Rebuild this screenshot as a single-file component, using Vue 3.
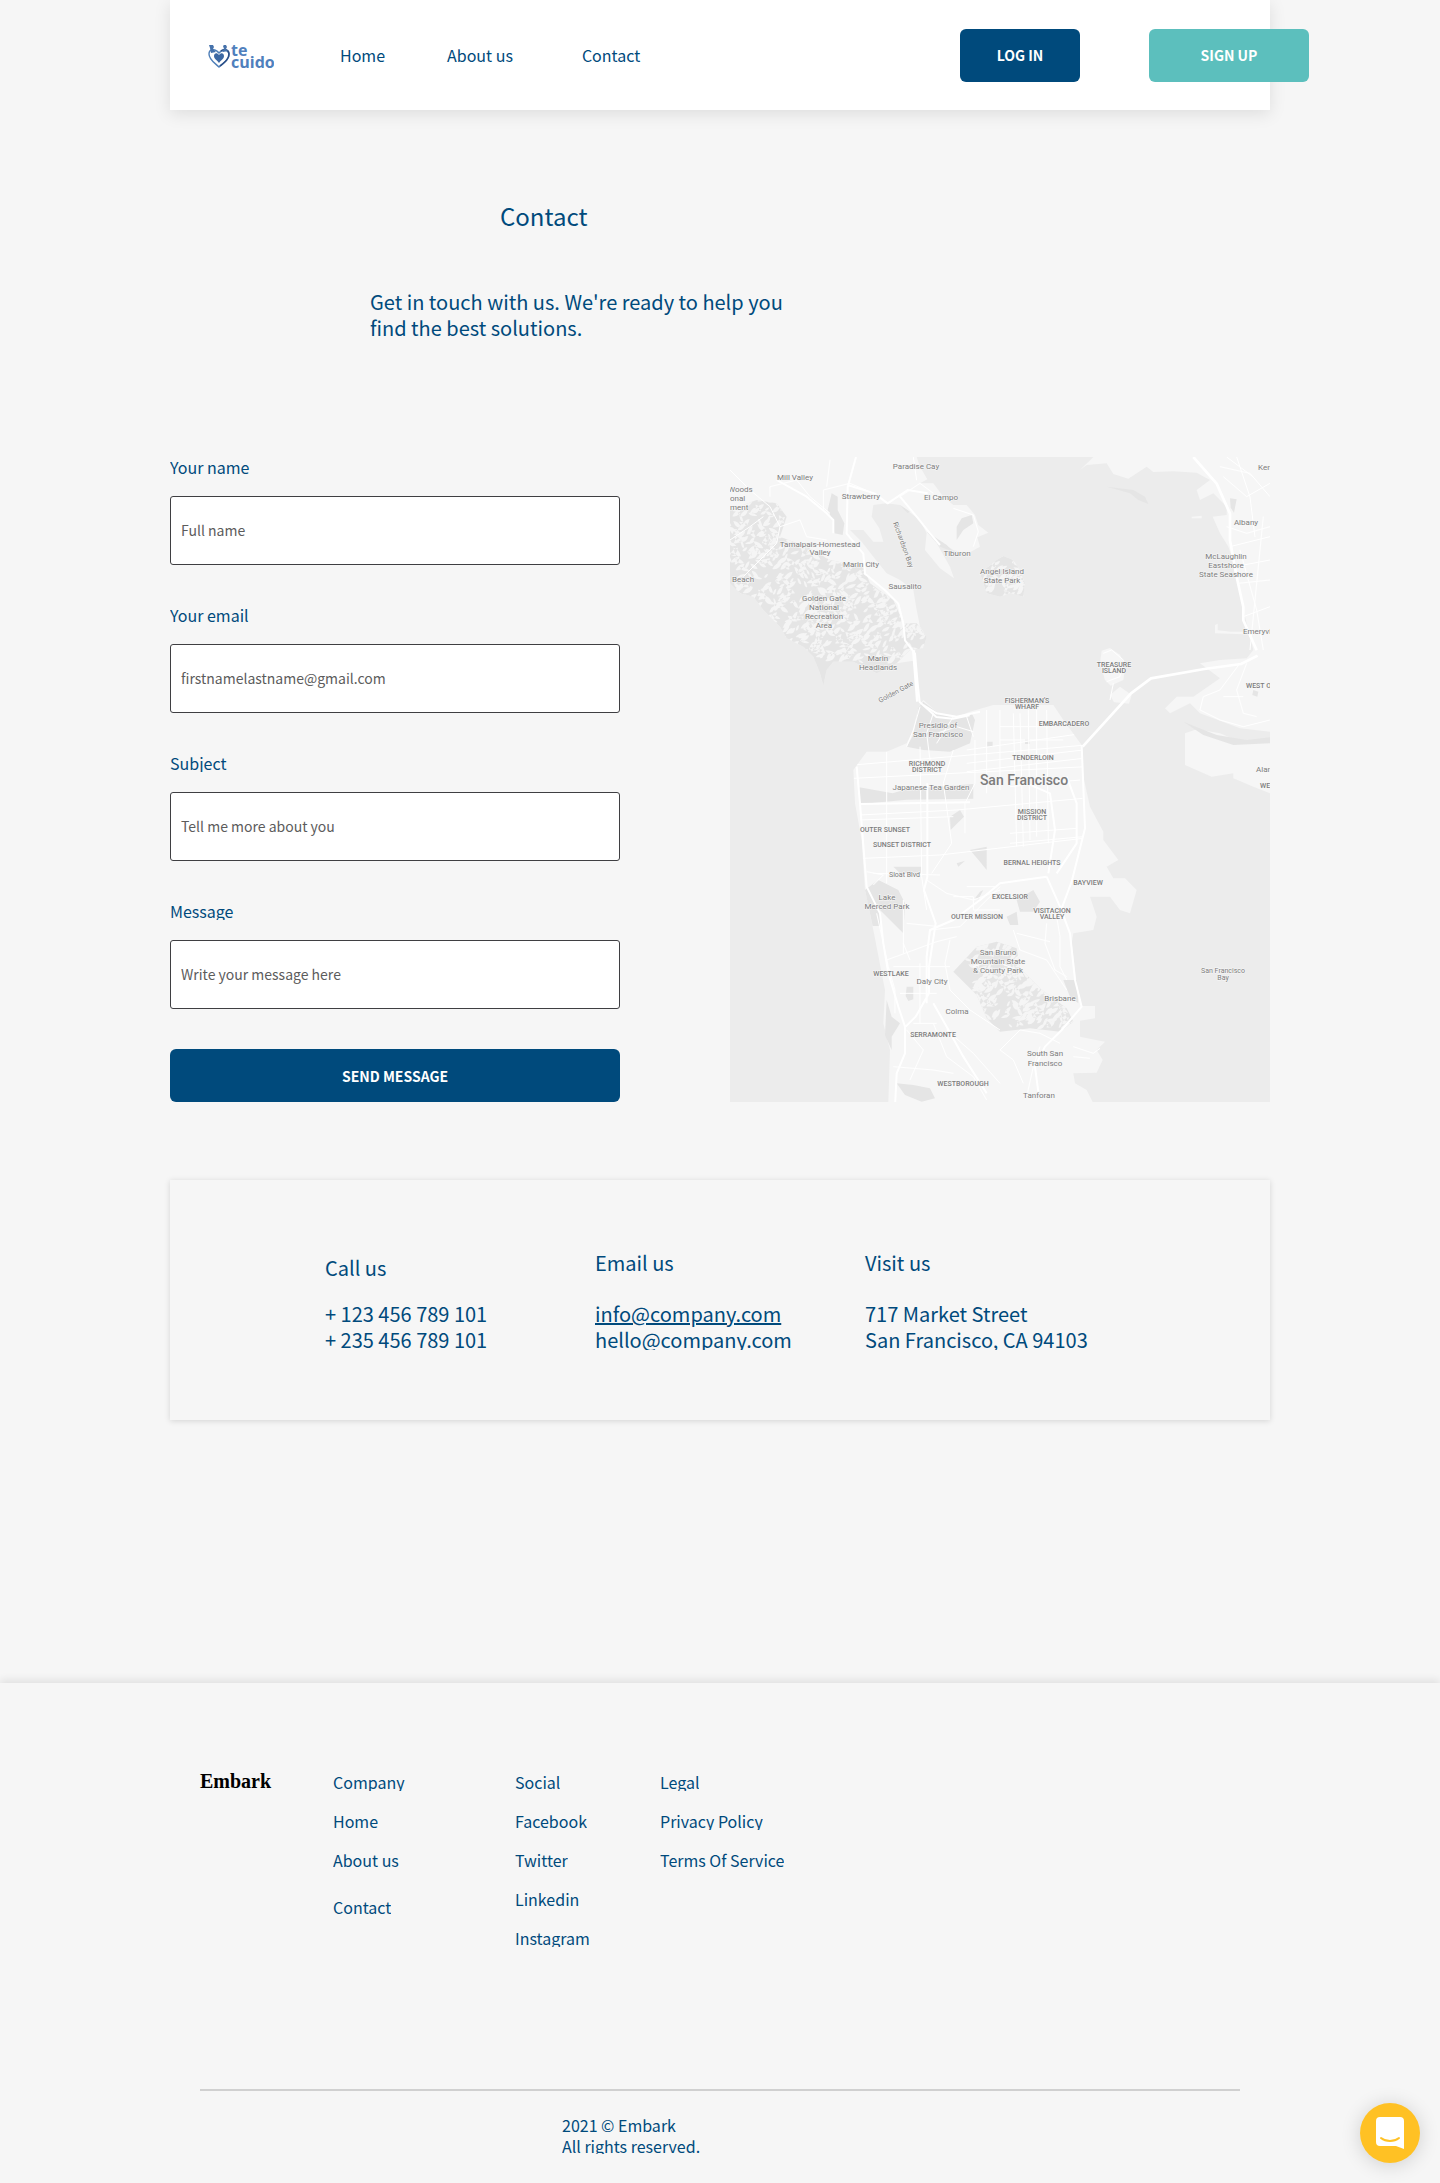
<script setup>
const nav = ['Home', 'About us', 'Contact']

const fields = [
  { id: 'name', label: 'Your name', type: 'text', placeholder: 'Full name' },
  { id: 'email', label: 'Your email', type: 'email', placeholder: 'firstnamelastname@gmail.com' },
  { id: 'subject', label: 'Subject', type: 'text', placeholder: 'Tell me more about you' },
  { id: 'message', label: 'Message', type: 'text', placeholder: 'Write your message here' }
]

const footerColumns = [
  { title: 'Company', links: ['Home', 'About us', 'Contact'] },
  { title: 'Social', links: ['Facebook', 'Twitter', 'Linkedin', 'Instagram'] },
  { title: 'Legal', links: ['Privacy Policy', 'Terms Of Service'] }
]

// Small deterministic generator, so the hill shading is the same on each load.
function ridges(seed, count, x0, y0, x1, y1) {
  let s = seed
  const rnd = () => {
    s = (s * 16807) % 2147483647
    return s / 2147483647
  }
  let d = ''
  for (let i = 0; i < count; i++) {
    const x = Math.round(x0 + rnd() * (x1 - x0))
    const y = Math.round(y0 + rnd() * (y1 - y0))
    const dx = Math.round(10 + rnd() * 22) * (rnd() > 0.3 ? 1 : -1)
    const dy = Math.round(8 + rnd() * 18)
    d += `M${x} ${y}q${Math.round(dx / 3)} ${-dy} ${dx} ${-dy}q${Math.round(-dx / 4)} ${dy + 4} ${-dx} ${dy}l6 9z`
  }
  return d
}
const marinRidges = ridges(71, 1000, 30, 150, 620, 640)
const brunoRidges = ridges(93, 300, 750, 1480, 1050, 1740)
const angelRidges = ridges(17, 70, 785, 320, 915, 445)

const towns = [
  [65, 23, 'Mill Valley'], [186, 12, 'Paradise Cay'], [131, 42, 'Strawberry'], [211, 43, 'El Campo'],
  [90, 90, 'Tamalpais-Homestead'], [90, 98, 'Valley'], [131, 110, 'Marin City'], [227, 99, 'Tiburon'],
  [13, 125, 'Beach'], [175, 132, 'Sausalito'], [94, 144, 'Golden Gate'], [94, 153, 'National'],
  [94, 162, 'Recreation'], [94, 171, 'Area'], [148, 204, 'Marin'], [148, 213, 'Headlands'],
  [272, 117, 'Angel Island'], [272, 126, 'State Park'], [208, 271, 'Presidio of'], [208, 280, 'San Francisco'],
  [516, 68, 'Albany'], [496, 102, 'McLaughlin'], [496, 111, 'Eastshore'], [496, 120, 'State Seashore'],
  [201, 333, 'Japanese Tea Garden'], [157, 443, 'Lake'], [157, 452, 'Merced Park'],
  [202, 527, 'Daly City'], [227, 557, 'Colma'], [268, 498, 'San Bruno'], [268, 507, 'Mountain State'],
  [268, 516, '& County Park'], [330, 544, 'Brisbane'], [315, 599, 'South San'], [315, 609, 'Francisco'],
  [309, 641, 'Tanforan']
]
const edgeTowns = [
  [-2, 35, 'Woods'], [0, 44, 'onal'], [0, 53, 'ment'], [528, 13, 'Ken'], [513, 177, 'Emeryville'], [526, 315, 'Alameda']
]
const districts = [
  [384, 210, 'TREASURE'], [384, 216, 'ISLAND'], [297, 246, "FISHERMAN'S"], [297, 252, 'WHARF'],
  [334, 269, 'EMBARCADERO'], [303, 303, 'TENDERLOIN'], [197, 309, 'RICHMOND'], [197, 315, 'DISTRICT'],
  [302, 357, 'MISSION'], [302, 363, 'DISTRICT'], [155, 375, 'OUTER SUNSET'], [172, 390, 'SUNSET DISTRICT'],
  [302, 408, 'BERNAL HEIGHTS'], [358, 428, 'BAYVIEW'], [280, 442, 'EXCELSIOR'], [322, 456, 'VISITACION'],
  [322, 462, 'VALLEY'], [247, 462, 'OUTER MISSION'], [161, 519, 'WESTLAKE'], [203, 580, 'SERRAMONTE'],
  [233, 629, 'WESTBOROUGH']
]
</script>

<template>
  <div class="page">
    <header class="topbar">
      <a class="logo" href="#" aria-label="te cuido">
        <svg viewBox="0 0 66 28" width="66" height="28">
          <g transform="translate(0 3)">
            <path d="M11 23C7 19 1 16 1 10 1 5 7 4 11 9c4-5 10-3 10 2 0 5-6 8-10 12z" fill="none" stroke="#4f7fb8" stroke-width="1.4" />
            <path d="M12 22c5-4 9-7 9-12 0-4-4-6-8-3" fill="none" stroke="#2c4f87" stroke-width="1.6" />
            <path d="M11 19c-2-3-5-4-5-7 0-3 3-4 5-1 2-3 5-2 5 1 0 3-3 4-5 7z" fill="#3c68a3" />
            <path d="M1 1h4l1 2-1 2 3 3-5 1-1-5zM15 2l1-1h2l1 2-1 2 2 2-5 1-1-1 2-2z" fill="#4672ab" />
          </g>
          <text x="23" y="15" class="logo-text">te</text>
          <text x="23" y="27" class="logo-text">cuido</text>
        </svg>
      </a>
      <nav class="nav">
        <a v-for="item in nav" :key="item" href="#">{{ item }}</a>
      </nav>
      <div class="actions">
        <button type="button" class="btn login">LOG IN</button>
        <button type="button" class="btn signup">SIGN UP</button>
      </div>
    </header>

    <main class="content">
      <section class="intro">
        <h1>Contact</h1>
        <p>Get in touch with us. We're ready to help you find the best solutions.</p>
      </section>

      <section class="reach">
        <form class="form" @submit.prevent>
          <div v-for="f in fields" :key="f.id" class="field">
            <label :for="f.id">{{ f.label }}</label>
            <input :id="f.id" :type="f.type" :placeholder="f.placeholder" />
          </div>
          <button type="submit" class="btn">SEND MESSAGE</button>
        </form>

        <svg class="map" viewBox="0 0 540 645" preserveAspectRatio="xMidYMid slice" role="img" aria-label="Map of San Francisco">
          <defs>
            <clipPath id="marin-hills">
              <path d="M30 180L110 150 170 160 200 200 180 260 260 290 330 330 430 350 450 400 520 450 550 520 590 520 620 560 610 595 570 600 530 640 470 670 400 635 340 635 320 660 310 707 300 670 280 620 250 590 200 565 180 530 130 480 100 440 60 430 30 400z" />
            </clipPath>
            <clipPath id="bruno-hills">
              <path d="M770 1490l60-15 60 20 10 60 60 60 80 60 20 40-40 30-90-10-90 10-40-40-30-70-70-70z" />
            </clipPath>
            <clipPath id="angel"><path d="M780 370l50-40 20-12 30 12 20 30 15 40-5 40-40-10-30 10-40-10-10-30z" /></clipPath>
            <clipPath id="city">
              <path d="M400 960L440 905 500 905 560 880 600 890 740 880 760 780 840 770 1000 765 1030 810 1085 885 1090 1180 1030 1290 700 1290 640 1450 460 1450 430 1300 425 1170 405 1060z" />
            </clipPath>
          </defs>
          <g transform="scale(0.33333) translate(-30 -21)">
            <path class="water" d="M30 21H1650V1956H30z" />
            <g class="land">
              <path d="M30 21H590L600 50 622 88 600 100 640 100 670 140 700 165 740 165 765 195 775 225 805 248 772 262 780 290 740 312 700 300 640 262 690 350 702 385 660 355 615 300 620 250 600 210 540 165 500 160 460 165 455 200 478 235 490 275 460 275 430 240 390 240 425 275 460 320 500 370 540 390 580 420 590 480 600 530 620 560 610 595 588 590 580 632 530 640 470 670 400 635 340 635 320 660 310 707 300 670 280 620 250 590 200 565 180 530 130 480 100 440 60 430 30 400z" />
              <path d="M780 370l50-40 20-12 30 12 20 30 15 40-5 40-40-10-30 10-40-10-10-30z" />
              <path d="M1080 60l40-39H1650V845L1560 835 1440 790 1410 760 1350 790 1335 775 1370 740 1420 740 1500 685 1440 640 1500 630 1580 625 1600 600 1580 520 1570 480 1560 420 1540 330 1525 290 1500 250 1478 200 1520 195 1520 170 1480 130 1440 150 1430 120 1470 90 1430 68 1360 64 1300 66 1280 50 1225 86 1180 72 1160 40 1100 45z" />
              <path d="M1395 850l35-12 70 12 60 25 90-5v160l-50-20-60-25 0-15-65 10-80-35z" />
              <path d="M400 960L440 905 500 905 560 880 580 840 595 770 610 750 650 785 700 805 750 785 820 765 1000 765 1030 810 1085 885 1090 980 1110 1070 1150 1145 1150 1170 1195 1230 1160 1250 1180 1285 1215 1285 1250 1320 1230 1390 1200 1380 1170 1340 1110 1340 1130 1400 1120 1440 1060 1450 1055 1480 1070 1600 1085 1668 1125 1668V1705L1080 1712V1760L1155 1775 1130 1800 1148 1830 1130 1868 1060 1870 1065 1900 1100 1920 1118 1956H505L510 1800 490 1720 495 1620 460 1440 435 1320 425 1170 405 1060z" />
              <path d="M1140 640l5-38 25-8 30 20 16 36-6 40-38 17-17-17z" />
              <path d="M1170 735l30-25 35 25-8 26-45-4z" />
              <path d="M1415 200l30-3v8h-30zM1485 550v-25l8-4v20l40 4h40v8z" />
            </g>
            <g class="park">
              <path d="M30 180L110 150 170 160 200 200 180 260 260 290 330 330 430 350 450 400 520 450 550 520 590 520 620 560 610 595 570 600 530 640 470 670 400 635 340 635 320 660 310 707 300 670 280 620 250 590 200 565 180 530 130 480 100 440 60 430 30 400z" />
              <path d="M780 370l50-40 20-12 30 12 20 30 15 40-5 40-40-10-30 10-40-10-10-30z" />
              <path d="M335 130l18 10 0 40 20 40-5 35-25-5-5-40-15-30z" />
              <path d="M725 205l30-10 5 25-30 20-20 30 0-40zM620 245l60 40 20 20-40-15zM540 165l30 20-8 4z" />
              <path d="M595 770l15-15 40 30 50 20 55-15 10 20-15 70-60 25-80-5-50-10 20-35z" />
              <path d="M418 1012l100 18 40-12 202-16v44l-200 3-142 14z" />
              <path d="M435 1320l40-30 60 30 20 40-5 90-70-70 0 48-22 0z" />
              <path d="M500 1650l15 50 25 20-25 40v40l-20-45zM530 1900l50 5 50 10 15 30-40 10-50-20zM560 1610h20v38l-15 5-8-15z" />
              <path d="M770 1490l60-15 60 20 10 60 60 60 80 60 20 40-40 30-90-10-90 10-40-40-30-70-70-70z" />
              <path d="M690 1100l30-20 12 20-25 25-15 15zM750 1200l50-10v70l-20-25zM520 1250h85v20h-65zM780 1325l10-5-15 28-10-3zM890 1350l50-30 20 35-20 30h-40zM860 1400l30-15 5 40-25 0zM710 1240l25-8-20 18z" />
              <path d="M1160 110l80 10 35 20 10 22-30-12-25-20zM1030 1590h40l5 70-25-20zM1390 815l100 40 90 15 70-8v18l-110 5-90-30z" />
              <path d="M590 1180l12 0v10h-12zM900 740h30v20h-30zM800 875h18v15h-18zM915 868h14v14h-14zM1600 720l15 5-3 15-15-5zM1530 145l20 3-8 40-10-15z" />
            </g>
            <g class="ridge">
              <path clip-path="url(#marin-hills)" :d="marinRidges" />
              <path clip-path="url(#bruno-hills)" :d="brunoRidges" />
              <path clip-path="url(#angel)" :d="angelRidges" />
            </g>
            <g class="roads thin">
              <path d="M30 60l60 60 60 50 30 60-10 50-40 40-60 60M150 140V110l80-20 40 50 60 50M310 180v-60l80-20 70 30M330 30l-10 80M180 230l60-20 20 50 60 10M30 270l60-40 40-30M540 140l60-40 40 30M580 21l10 70M700 175l60 20 15 50-15 45" />
              <path d="M600 770l-20 70-20 50M640 790l-20 60 10 80M700 800l-50 80M740 800l20 60M650 850l60-20 50 15" />
              <path clip-path="url(#city)" d="M400 945l700-60M400 985l700-35M420 1095l290-15 380-35M420 1110l280-10M430 1225l230-10 430-50M460 1270l200 5M500 900v400M600 880l5 400 15 100M700 900l-30 100 25 180-60 90M765 870v130l-30 60v90M800 780v250M840 780v240M880 790l10 400M900 790l10 400M925 780l5 390M950 780l0 380M980 780l5 400M840 830h160M840 870h190M740 900l350-50M740 940l350-40M740 965l350-40M870 1010l210-20M870 1150l200-15M870 1180l220-20" />
              <path d="M440 1265l50 10-30 30M620 1290l60 40 80 20 80-30M560 1420l100 10M630 1440l90-10 60-60 60-60M470 1390l20 90 15 70 20 70 0 70M500 1530l150-55 60-15M550 1480l20 50M550 1350v160M520 1550h170M540 1630h110M580 1720h70M600 1540v180M690 1470l-15 70 15 80 60 60 90 60M680 1740l80 70 80 90M560 1740l50 60-40 90M640 1720l40 100 80 60 40 70M520 1850l120 10 60 10M760 1550l60-20 70 30M840 1800l60-60 60 10 60 30M840 1800l40 30 30 70M960 1790l-20 60-20 90M880 1440l20 60 80 30 60 90M890 1450l60 15 40 10M1010 1400l10 60v90l20 40M980 1420l-5 60 30 80 35 20M1060 1790l60 20 20-15M1060 1820l50 5M740 1310l90 0M700 1340h60v40h80" />
              <path d="M1510 80l70 60 70-40M1550 21l40 120 15 120M1500 50l90 20 60 70M1520 230l60 20 70-20M1530 290l120-30M1545 350l105-20M1555 400l95-10M1570 500l80-30M1590 600l40-400M1560 300l50 180 20 120M1520 21l80 60M1580 640l-30 80 20 70 40 10M1560 640l-60 80-50 20-10 40 60 30 70 20 80-20M1510 740l60 0" />
              <path d="M1150 610l25-10 35 30-10 50-40 15M1170 750l10-50" />
            </g>
            <g class="roads">
              <path d="M408 21l-25 90-3 140 50 60 5 60 60 50 40 40 15 60 5 50 30 40 8 90 6 55 50 45 50 5 50-10M170 90l90 50 60 50 20 20v40M383 105l80 25 40 30 60-40 60 10M540 140l50 60 40 50 30 35" />
              <path class="wide" d="M580 600l12 155M1088 890l145-160 60-45 160-28 110-15 50-25M1420 21l70 80 40 90 0 80 20 110 20 90 0 40 40 90" />
              <path d="M610 765l40 25 60 10 70-15M410 950l10 110 15 190 5 60 40 80 10 90 15 90 30 100 20 60 0 80-25 60-5 100M622 1000l0 280-10 40 35 100-20 130 0 80-40 70-30 30M420 1062l330-5M980 1280l-140 20-60 50-80 60-70 30-10 80 0 140M980 1280l40 90 30 80 15 140 20 80-60 70-50 50-30 60 10 76M1085 885l10 250-40 160-30 80M920 1000l70 30 15 110-20 130M1040 980l30 80 0 120-60 90M640 1660l40 70 50 90 70 110" />
            </g>
          </g>
          <g class="labels">
            <text v-for="(t, i) in towns" :key="'t' + i" :x="t[0]" :y="t[1]" text-anchor="middle">{{ t[2] }}</text>
            <text v-for="(t, i) in edgeTowns" :key="'e' + i" :x="t[0]" :y="t[1]">{{ t[2] }}</text>
            <text class="small" x="493" y="516" text-anchor="middle">San Francisco</text>
            <text class="small" x="493" y="523" text-anchor="middle">Bay</text>
            <text class="small" x="159" y="420">Sloat Blvd</text>
            <text class="small" transform="translate(163 66) rotate(70)">Richardson Bay</text>
            <text class="small" transform="translate(150 246) rotate(-28)">Golden Gate</text>
          </g>
          <g class="labels district">
            <text v-for="(t, i) in districts" :key="'d' + i" :x="t[0]" :y="t[1]" text-anchor="middle">{{ t[2] }}</text>
            <text x="516" y="231">WEST OAKLAND</text>
            <text x="530" y="331">WEST END</text>
          </g>
          <text class="labels city" x="294" y="328" text-anchor="middle">San Francisco</text>
        </svg>
      </section>

      <section class="card">
        <div class="info">
          <h2 class="low">Call us</h2>
          <p>+ 123 456 789 101<br />+ 235 456 789 101</p>
        </div>
        <div class="info">
          <h2>Email us</h2>
          <p><a class="underlined" href="#">info@company.com</a><br /><a href="#">hello@company.com</a></p>
        </div>
        <div class="info">
          <h2>Visit us</h2>
          <p>717 Market Street<br />San Francisco, CA 94103</p>
        </div>
      </section>
    </main>

    <footer class="footer">
      <div class="footer-inner">
        <div class="columns">
          <a class="brand" href="#">Embark</a>
          <section v-for="col in footerColumns" :key="col.title" class="column" :class="col.title.toLowerCase()">
            <h3>{{ col.title }}</h3>
            <a v-for="link in col.links" :key="link" href="#">{{ link }}</a>
          </section>
        </div>
        <hr />
        <p class="copyright">2021 © Embark<br />All rights reserved.</p>
      </div>
    </footer>

    <button type="button" class="chat" aria-label="Open chat">
      <svg viewBox="0 0 28 32" width="28" height="32">
        <path d="M4 0h20a4 4 0 0 1 4 4v28l-8-3H4a4 4 0 0 1-4-4V4a4 4 0 0 1 4-4z" fill="#fff" />
        <path d="M5 21c5 4 13 4 18 0" fill="none" stroke="#ffc124" stroke-width="2" stroke-linecap="round" />
      </svg>
    </button>
  </div>
</template>

<style>
body {
  margin: 0;
  background: #f6f6f6;
}
</style>

<style scoped>
.page {
  background: #f6f6f6;
  color: #004a7c;
  font-family: "Noto Sans CJK SC", "Open Sans", sans-serif;
  font-size: 16px;
  line-height: 18px;
}
.page * {
  box-sizing: border-box;
}
h1, h2, h3, p {
  margin: 0;
  font-weight: 400;
}
a {
  color: inherit;
  text-decoration: none;
}
.topbar,
.content {
  width: 100%;
  max-width: 1100px;
  margin: 0 auto;
}
.topbar {
  display: flex;
  align-items: center;
  height: 110px;
  padding-left: 38px;
  background: #fff;
  box-shadow: 0 4px 16px rgba(0, 0, 0, 0.1);
}
.logo {
  display: flex;
}
.logo-text {
  font: 700 16px "Open Sans", sans-serif;
  fill: #4f80bd;
}
.nav {
  display: flex;
  gap: 62px;
  margin-left: 66px;
}
.nav a:last-child {
  margin-left: 7px;
}
.actions {
  display: flex;
  gap: 69px;
  margin: 0 -39px 0 auto;
}
.btn {
  height: 53px;
  border: 0;
  border-radius: 6px;
  background: #004a7c;
  color: #fff;
  font: 700 14px/20px "Noto Sans CJK SC", "Open Sans", sans-serif;
}
.login {
  width: 120px;
}
.signup {
  width: 160px;
  background: #5cbfbd;
}
.intro {
  padding: 90px 0 116px 200px;
}
.intro h1 {
  padding-left: 130px;
  font-size: 24px;
  line-height: 31px;
}
.intro p {
  max-width: 420px;
  margin-top: 58px;
  font-size: 20px;
  line-height: 26px;
}
.reach {
  display: grid;
  grid-template-columns: 450fr 540fr;
  gap: 110px;
}
.form {
  display: flex;
  flex-direction: column;
  gap: 40px;
}
.field {
  display: flex;
  flex-direction: column;
  gap: 20px;
}
.field label {
  overflow: hidden;
  padding-top: 1px;
}
.field input {
  width: 100%;
  height: 69px;
  padding: 0 10px 2px;
  border: 1px solid #3f3f42;
  border-radius: 3px;
  background: #fff;
  color: #333;
  font-family: inherit;
  font-size: 14px;
}
.field input::placeholder {
  color: #5c5c5c;
  opacity: 1;
}
.map {
  display: block;
  width: 100%;
  height: 645px;
}
.water { fill: #ececec; }
.land { fill: #f6f6f6; }
.park { fill: #e5e5e5; }
.ridge { fill: #f5f5f5; }
.roads {
  fill: none;
  stroke: #fff;
  stroke-width: 6;
  stroke-linejoin: round;
}
.roads.thin { stroke-width: 3; }
.roads .wide { stroke-width: 8; }
.labels {
  font-family: Roboto, sans-serif;
  font-size: 8px;
  fill: #7c7c7c;
  stroke: #f8f8f8;
  stroke-width: 1px;
  paint-order: stroke;
}
.labels .small { font-size: 7px; }
.labels.district {
  font-size: 7px;
  font-weight: 500;
}
.labels.city {
  font-size: 14px;
  font-weight: 500;
}
.card {
  display: grid;
  grid-template-columns: repeat(3, 270px);
  min-height: 240px;
  margin-top: 78px;
  padding: 70px 0 0 155px;
  font-size: 20px;
  line-height: 26px;
  box-shadow: 0 1px 6px rgba(0, 0, 0, 0.14);
}
.info h2 {
  height: 51px;
  font-size: 20px;
}
.info .low {
  padding-top: 5px;
}
.info p {
  height: 49px;
  overflow: hidden;
}
.underlined {
  text-decoration: underline;
}
.footer {
  margin-top: 263px;
  box-shadow: 0 -3px 8px rgba(0, 0, 0, 0.09);
}
.footer-inner {
  width: 100%;
  max-width: 1040px;
  margin: 0 auto;
  padding: 89px 0 29px;
}
.columns {
  display: grid;
  grid-template-columns: 133px 182px 145px 1fr;
  min-height: 317px;
}
.brand {
  color: #000;
  font-family: "Liberation Serif", serif;
  font-size: 20px;
  font-weight: 700;
}
.column {
  display: flex;
  flex-direction: column;
  align-items: flex-start;
  gap: 20px;
}
.column h3,
.column a {
  overflow: hidden;
  padding-top: 1px;
  font-size: 16px;
}
.company a:last-child {
  margin-top: 8px;
}
hr {
  height: 2px;
  margin: 0;
  border: 0;
  background: #d0d0d0;
}
.copyright {
  height: 39px;
  margin: 24px 0 0 362px;
  overflow: hidden;
  line-height: 21px;
}
.chat {
  position: fixed;
  right: 20px;
  bottom: 20px;
  display: flex;
  align-items: center;
  justify-content: center;
  width: 60px;
  height: 60px;
  padding: 0;
  border: 0;
  border-radius: 50%;
  background: #ffc124;
  box-shadow: 0 2px 20px rgba(0, 0, 0, 0.16);
}
</style>
